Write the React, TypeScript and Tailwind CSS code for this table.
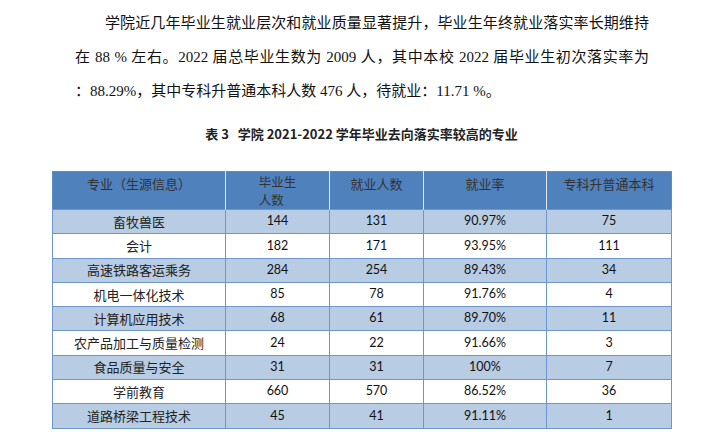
const rows = [
  { name: '畜牧兽医', grads: '144', employed: '131', rate: '90.97%', upgrade: '75' },
  { name: '会计', grads: '182', employed: '171', rate: '93.95%', upgrade: '111' },
  { name: '高速铁路客运乘务', grads: '284', employed: '254', rate: '89.43%', upgrade: '34' },
  { name: '机电一体化技术', grads: '85', employed: '78', rate: '91.76%', upgrade: '4' },
  { name: '计算机应用技术', grads: '68', employed: '61', rate: '89.70%', upgrade: '11' },
  { name: '农产品加工与质量检测', grads: '24', employed: '22', rate: '91.66%', upgrade: '3' },
  { name: '食品质量与安全', grads: '31', employed: '31', rate: '100%', upgrade: '7' },
  { name: '学前教育', grads: '660', employed: '570', rate: '86.52%', upgrade: '36' },
  { name: '道路桥梁工程技术', grads: '45', employed: '41', rate: '91.11%', upgrade: '1' },
]

const serif = "font-['Liberation_Serif','Noto_Sans_CJK_SC',serif]"
const sans = "font-['Noto_Sans_CJK_SC',sans-serif]"
const num = "font-['Lato','Noto_Sans_CJK_SC',sans-serif]"

export default function App() {
  return (
    <div className="w-[714px] h-[447px] bg-white overflow-hidden text-[#111]">
      {/* Paragraph */}
      <div className={`ml-[75px] w-[574px] pt-[6px] text-[15px] leading-[34px] ${serif}`}>
        <div className="pl-[30px] text-justify [text-align-last:justify]">
          学院近几年毕业生就业层次和就业质量显著提升，毕业生年终就业落实率长期维持
        </div>
        <div className="text-justify [text-align-last:justify]">
          在 88 % 左右。2022 届总毕业生数为 2009 人，其中本校 2022 届毕业生初次落实率为
        </div>
        <div>：88.29%，其中专科升普通本科人数 476 人，待就业：11.71 %。</div>
      </div>

      {/* Caption */}
      <div className="w-[619px] ml-[52px] mt-[15px] leading-[20px] text-center">
        <span className={`text-[13px] font-bold whitespace-pre text-[#222] ${sans}`}>
          表 3   学院 2021-2022 学年毕业去向落实率较高的专业
        </span>
      </div>

      {/* Table */}
      <table className="ml-[52px] mt-[27px] w-[619px] table-fixed border-collapse border border-[#5f8bc6]">
        <colgroup>
          <col className="w-[173px]" />
          <col className="w-[104px]" />
          <col className="w-[94px]" />
          <col className="w-[123px]" />
          <col className="w-[125px]" />
        </colgroup>
        <thead>
          <tr className={`h-[38px] bg-[#4f81bd] text-[13px] leading-[17px] text-[#333] font-normal ${sans}`}>
            <th className="align-top pt-[3px] font-normal">专业（生源信息）</th>
            <th className="align-top pt-[1px] font-normal border-l border-[#dfe8f4]">
              <span className="inline-flex flex-col items-start text-[12.5px] leading-[18px]">
                <span>毕业生</span>
                <span>人数</span>
              </span>
            </th>
            <th className="align-top pt-[3px] font-normal border-l border-[#dfe8f4]">就业人数</th>
            <th className="align-top pt-[3px] font-normal border-l border-[#dfe8f4]">就业率</th>
            <th className="align-top pt-[3px] font-normal border-l border-[#dfe8f4]">专科升普通本科</th>
          </tr>
        </thead>
        <tbody>
          {rows.map((r, i) => (
            <tr key={r.name} className={`h-[24.3px] ${i % 2 === 0 ? 'bg-[#b8cce4]' : 'bg-white'}`}>
              <td className={`border border-[#6f96cc] text-center text-[13px] leading-[16px] text-[#222] ${sans}`}>
                {r.name}
              </td>
              <td className={`border border-[#6f96cc] text-center text-[12.5px] ${num}`}>{r.grads}</td>
              <td className={`border border-[#6f96cc] text-center text-[12.5px] ${num}`}>{r.employed}</td>
              <td className={`border border-[#6f96cc] text-center text-[12.5px] ${num}`}>{r.rate}</td>
              <td className={`border border-[#6f96cc] text-center text-[12.5px] ${num}`}>{r.upgrade}</td>
            </tr>
          ))}
        </tbody>
      </table>
    </div>
  )
}
